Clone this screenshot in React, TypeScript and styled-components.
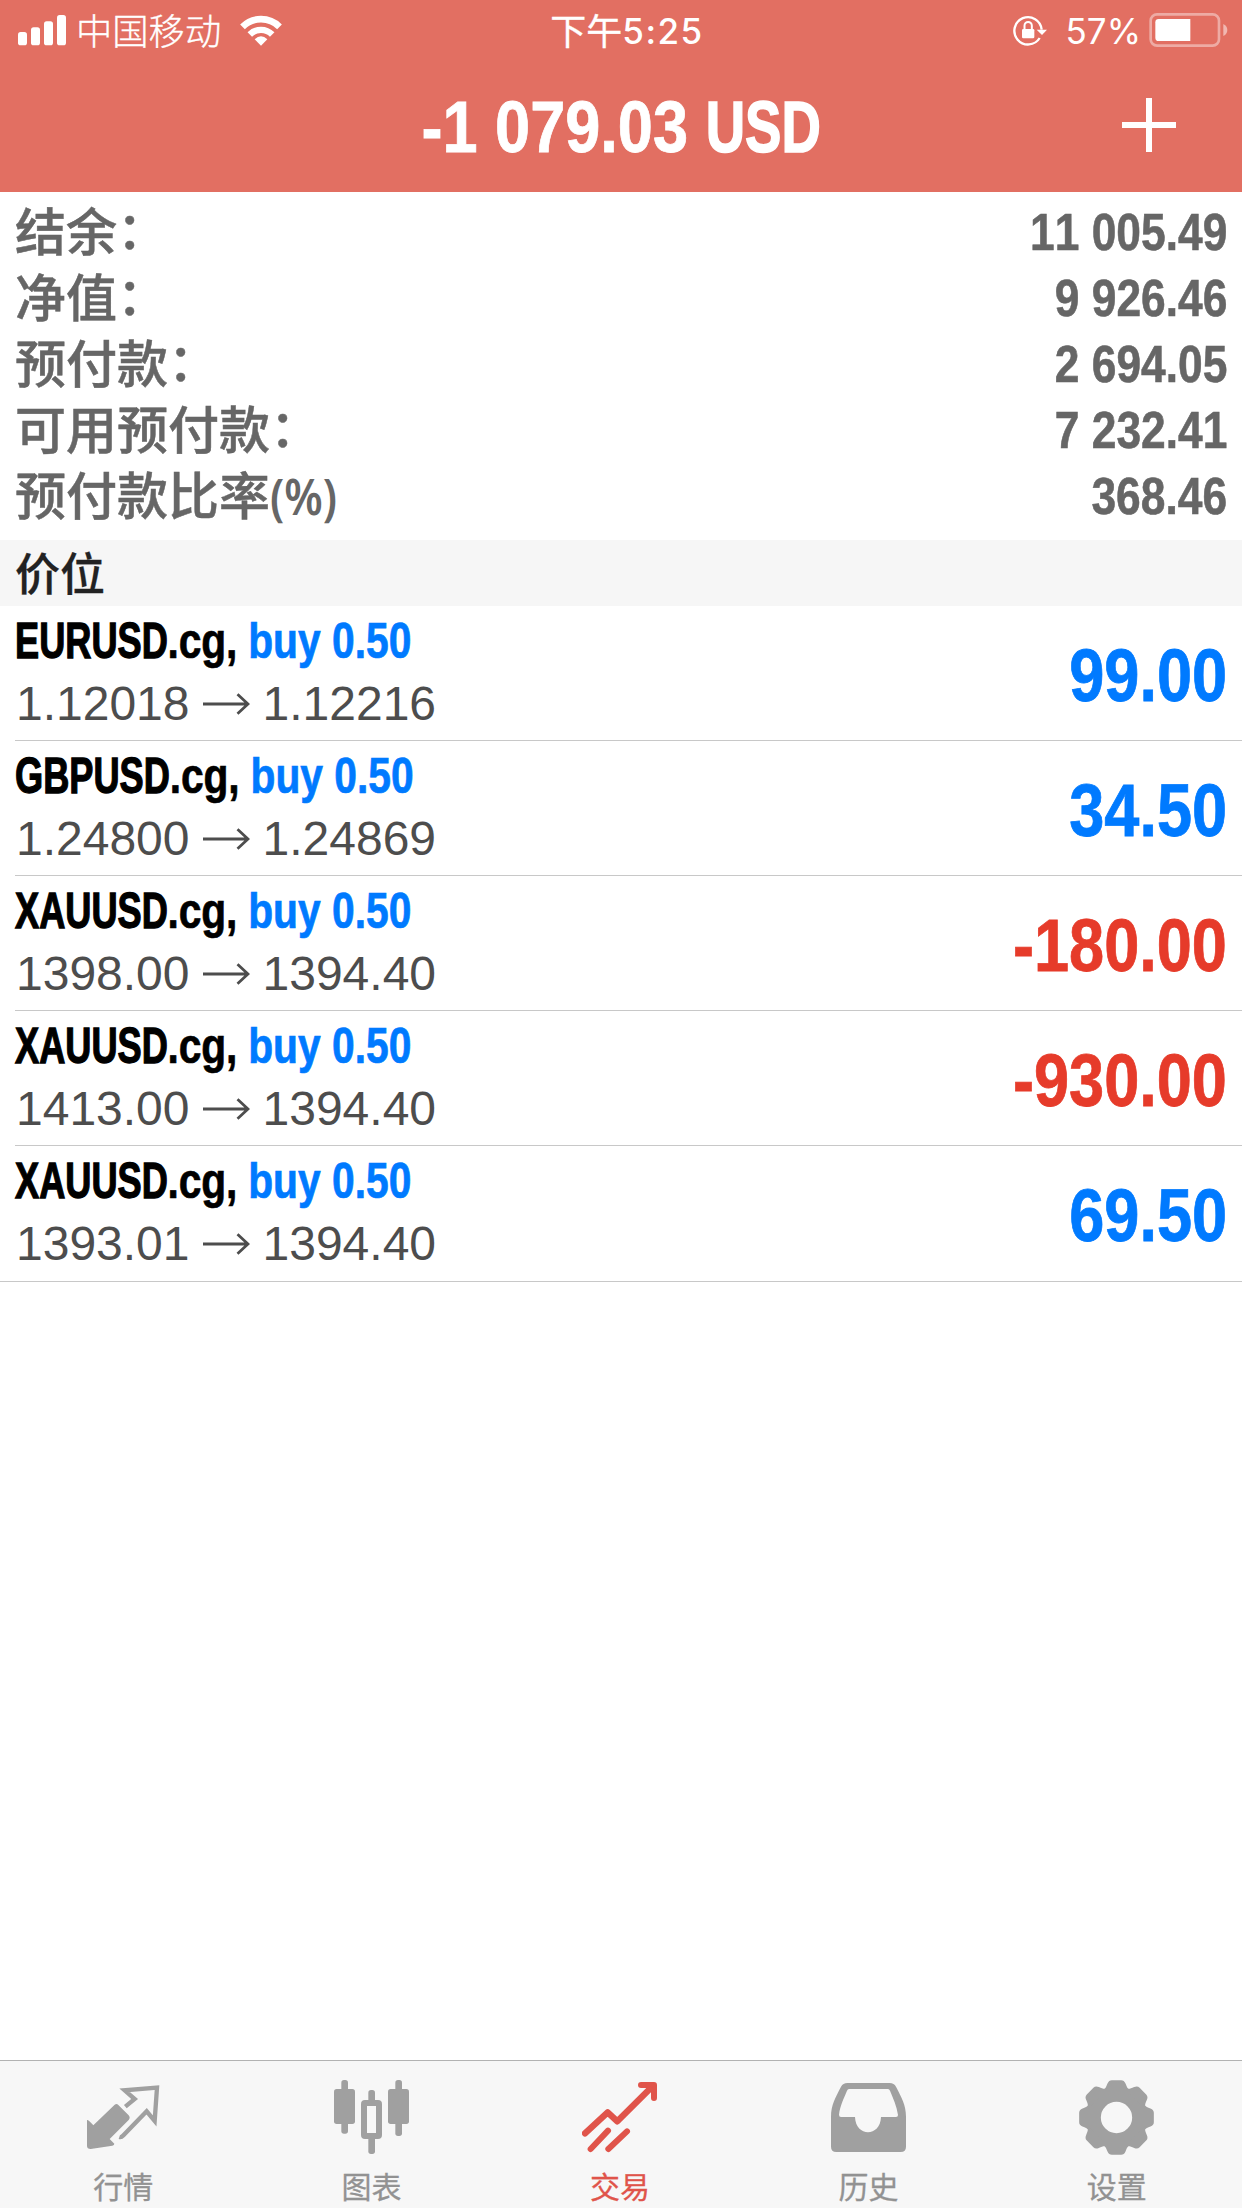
import React from "react";
import styled, { createGlobalStyle } from "styled-components";

const GlobalStyle = createGlobalStyle`
  html, body { margin: 0; padding: 0; background: #fff; }
  *, *::before, *::after { box-sizing: border-box; }
`;

const latin = `"Liberation Sans", "Noto Sans CJK SC", sans-serif`;
const cjk = `"Noto Sans CJK SC", sans-serif`;

const Screen = styled.div`
  width: 1242px;
  height: 2208px;
  display: flex;
  flex-direction: column;
  overflow: hidden;
  background: #fff;
  font-family: ${latin};
  font-kerning: none;
`;

const Header = styled.header`
  height: 192px;
  flex: none;
  display: flex;
  flex-direction: column;
  color: #fff;
  background: #e26f62;
`;

const StatusBar = styled.div`
  height: 60px;
  display: grid;
  grid-template-columns: 1fr auto 1fr;
  align-items: center;
  padding: 0 14px 0 18px;
`;

const StatusGroup = styled.div<{ $end?: boolean }>`
  display: flex;
  align-items: center;
  justify-content: ${(p) => (p.$end ? "flex-end" : "flex-start")};
`;

const Carrier = styled.span`
  margin: -2px 19px 0 10px;
  font: 300 36.3px/60px ${cjk};
  -webkit-text-stroke: 0.35px currentColor;
`;

const Clock = styled.div`
  display: flex;
  align-items: center;
  margin: 0 0 0 8px;
`;

const ClockPeriod = styled.span`
  margin-top: -2px;
  font: 400 36px/58px ${cjk};
  -webkit-text-stroke: 0.3px currentColor;
`;

const ClockDigits = styled.span`
  margin-top: 3px;
  font: 500 35px/57px Inter, sans-serif;
  letter-spacing: 1.5px;
`;

const Percent = styled.span`
  margin: 3px 8px 0 19px;
  font: 400 35px/57px Inter, sans-serif;
`;

const TitleBar = styled.div`
  height: 132px;
  display: grid;
  grid-template-columns: 1fr auto 1fr;
  align-items: center;
  padding-right: 66px;
  padding-left: 66px;
`;

const Title = styled.h1`
  grid-column: 2;
  margin: 2px 0 0;
  font-size: 73px;
  font-weight: 700;
  line-height: 130px;
  white-space: nowrap;
  transform: scaleX(0.864);
  -webkit-text-stroke: 0.8px currentColor;
`;

const Currency = styled.span`
  display: inline-block;
  margin: 0 -0.28em 0 0;
  transform: scaleX(0.865);
  transform-origin: left center;
  -webkit-text-stroke: 1.6px currentColor;
`;

const AddButton = styled.button`
  justify-self: end;
  width: 54px;
  height: 54px;
  margin-top: -2px;
  padding: 0;
  border: 0;
  background: none;
  color: inherit;
`;

const Summary = styled.section`
  flex: none;
  padding: 6px 15px 12px;
`;

const SummaryRow = styled.div`
  height: 66px;
  display: flex;
  align-items: center;
  justify-content: space-between;
  color: #666;
`;

const SummaryLabel = styled.span`
  margin-top: -4px;
  font: 500 51px/62px ${cjk};
  -webkit-text-stroke: 0.5px currentColor;
`;

const Colon = styled.span`
  line-height: 0;
  vertical-align: 2px;
`;

const Unit = styled.span`
  display: inline-block;
  font: 600 50px/50px "Noto Sans", sans-serif;
  -webkit-text-stroke: 0;
  transform: scaleX(0.88);
  transform-origin: left center;
`;

const SummaryValue = styled.span`
  margin-top: 2px;
  font-size: 52px;
  font-weight: 700;
  line-height: 64px;
  transform: scaleX(0.853);
  transform-origin: right center;
  -webkit-text-stroke: 0.6px currentColor;
`;

const SectionHeader = styled.h2`
  flex: none;
  height: 66px;
  margin: 0;
  padding-left: 15px;
  color: #222;
  background: #f6f6f6;
  font: 500 45px/64px ${cjk};
  -webkit-text-stroke: 0.3px currentColor;
`;

const Positions = styled.ul`
  flex: 1;
  margin: 0;
  padding: 0;
  list-style: none;
`;

const PositionRow = styled.li<{ $last: boolean }>`
  height: ${(p) => (p.$last ? 136 : 135)}px;
  margin-left: ${(p) => (p.$last ? 0 : 15)}px;
  padding: 0 15px 0 ${(p) => (p.$last ? 15 : 0)}px;
  display: flex;
  align-items: flex-start;
  justify-content: space-between;
  border-bottom: 1px solid #c8c8c8;
`;

const PositionInfo = styled.div`
  display: flex;
  flex-direction: column;
  padding-top: 4px;
`;

const SymbolLine = styled.div`
  font-size: 50px;
  font-weight: 700;
  line-height: 62px;
  white-space: pre;
  transform: scaleX(0.815);
  transform-origin: left center;
  -webkit-text-stroke: 0.7px currentColor;
`;

const Pair = styled.span`
  display: inline-block;
  margin-right: -0.48em;
  color: #000;
  transform: scaleX(0.888);
  transform-origin: left center;
  -webkit-text-stroke: 1.3px currentColor;
`;

const Suffix = styled.span`
  color: #000;
  letter-spacing: -0.2px;
`;

const Side = styled.span`
  color: #007aff;
`;

const PriceLine = styled.div`
  display: flex;
  align-items: center;
  gap: 13px;
  padding-left: 1px;
  color: #4d4d4d;
  font-size: 48px;
  line-height: 64px;
`;

const Profit = styled.span<{ $loss: boolean }>`
  color: ${(p) => (p.$loss ? "#e63b2a" : "#007aff")};
  font-size: 74px;
  font-weight: 700;
  line-height: 139px;
  transform: scaleX(0.853);
  transform-origin: right center;
  -webkit-text-stroke: 0.8px currentColor;
`;

const TabBar = styled.nav`
  height: 148px;
  flex: none;
  display: grid;
  grid-template-columns: repeat(5, 1fr);
  margin-left: -1px;
  padding-right: 1px;
  border-top: 1px solid #b2b2b2;
  background: #f7f7f7;
`;

const Tab = styled.a<{ $active?: boolean }>`
  display: flex;
  flex-direction: column;
  align-items: center;
  gap: 15px;
  padding-top: 19px;
  color: ${(p) => (p.$active ? "#e0544a" : "#a0a0a0")};
`;

const TabLabel = styled.span<{ $active?: boolean }>`
  color: ${(p) => (p.$active ? "#e0544a" : "#929292")};
  font: 400 30px/30px ${cjk};
  -webkit-text-stroke: 0.3px currentColor;
`;

const SignalIcon = () => (
  <svg width="48" height="31" viewBox="54 44 144 93" fill="currentColor">
    <rect x="54" y="95" width="27" height="40" rx="8" />
    <rect x="93" y="81" width="27" height="54" rx="8" />
    <rect x="132" y="63" width="27" height="72" rx="8" />
    <rect x="171" y="44" width="27" height="91" rx="8" />
  </svg>
);

const WifiIcon = () => (
  <svg width="42" height="31" viewBox="720 44 126 93" fill="none" stroke="currentColor">
    <path d="M727.5 79.5A78.5 78.5 0 0 1 838.5 79.5" strokeWidth="20" />
    <path d="M749.4 102.4A47.5 47.5 0 0 1 816.6 102.4" strokeWidth="19" />
    <path d="M783 136L764 117Q783 99 802 117Z" fill="currentColor" stroke="none" />
  </svg>
);

const RotationLockIcon = () => (
  <svg width="34" height="31" viewBox="518 44 102 93" fill="none" stroke="currentColor">
    <path d="M598 113A41 41 0 1 1 604 88" strokeWidth="7" />
    <path d="M589 88H620L605 104Z" fill="currentColor" stroke="none" />
    <rect x="545" y="86" width="37" height="28" rx="4" fill="currentColor" stroke="none" />
    <path d="M552.5 88V76A11 11 0 0 1 574.5 76V88" strokeWidth="6" />
  </svg>
);

const BatteryIcon = () => (
  <svg width="79" height="34" viewBox="926 39 237 102" fill="currentColor">
    <rect x="931" y="43" width="205" height="94" rx="19" fill="none" stroke="currentColor" strokeWidth="8" opacity=".42" />
    <path d="M1149 72Q1161 78 1161 90T1149 108Z" opacity=".5" />
    <path d="M1050 57V123H955Q945 123 945 113V67Q945 57 955 57Z" />
  </svg>
);

const PlusIcon = () => (
  <svg width="54" height="54" viewBox="0 0 54 54" display="block">
    <path d="M27 0V54M0 27H54" stroke="currentColor" strokeWidth="6" />
  </svg>
);

const PriceArrow = () => (
  <svg width="47" height="24" viewBox="0 0 47 24" fill="none" stroke="currentColor" strokeWidth="2.8">
    <path d="M0 12H45M34.5 2.3L45 12L34.5 21.7" />
  </svg>
);

const QuotesIcon = () => (
  <svg width="75" height="75" viewBox="258 90 225 225" fill="currentColor">
    <path d="M344 164Q350 159 355 165L386 196Q392 203 386 210L329 267L343 281Q343 286 337 287L272 297Q261 297 261 288V210Q265 209 280 226Z" />
    <path d="M376 170L404 147L374 121L471 113L464 213L440 184L369 257Q364 263 358 261" fill="none" stroke="currentColor" strokeWidth="13" />
  </svg>
);

const ChartIcon = () => (
  <svg width="75" height="75" viewBox="1005 90 225 225" fill="currentColor">
    <rect x="1027" y="90" width="20" height="161" rx="8" />
    <rect x="1005" y="117" width="63" height="105" rx="8" />
    <rect x="1189" y="90" width="20" height="168" rx="8" />
    <rect x="1167" y="117" width="63" height="105" rx="8" />
    <rect x="1108" y="120" width="20" height="45" rx="8" />
    <rect x="1108" y="255" width="20" height="57" rx="8" />
    <rect x="1095" y="159" width="45" height="99" rx="3" fill="none" stroke="currentColor" strokeWidth="18" />
  </svg>
);

const TradeIcon = () => (
  <svg width="75" height="75" viewBox="486 90 225 225" fill="none" stroke="currentColor" strokeLinejoin="round" strokeLinecap="round">
    <path d="M495 250L563 187L592 214L696 110" strokeWidth="19" />
    <path d="M663 105H702V144" strokeWidth="18" />
    <path d="M680 106L701 127V106Z" strokeWidth="8" fill="currentColor" />
    <path d="M512 297L564 242" strokeWidth="18" />
    <path d="M565 297L621 244" strokeWidth="18" />
  </svg>
);

const HistoryIcon = () => (
  <svg width="75" height="75" viewBox="24 90 225 225" fill="currentColor" fillRule="evenodd">
    <path d="M73 99H200Q213 99 219 110C235 142 249 164 249 200V290Q249 306 233 306H40Q24 306 24 290V200C24 164 38 142 54 110Q60 99 73 99ZM78 117Q74 117 72 122C62 146 51 168 48 194Q48 201 54 201H96C98 262 172 262 174 201H219Q225 201 225 195C221 168 211 146 201 122Q199 117 195 117Z" />
  </svg>
);

const toothAngles = [0, 45, 90, 135, 180, 225, 270, 315];

const SettingsIcon = () => (
  <svg width="75" height="75" viewBox="-112.5 -112.5 225 225" fill="currentColor">
    <circle r="69.5" fill="none" stroke="currentColor" strokeWidth="45" />
    {toothAngles.map((a) => (
      <path
        key={a}
        transform={`rotate(${a})`}
        d="M-46 -78C-32 -87 -32 -90 -27 -102Q-23 -112 -14 -112H14Q23 -112 27 -102C32 -90 32 -87 46 -78Z"
      />
    ))}
  </svg>
);

const balances = [
  { label: "结余", value: "11 005.49" },
  { label: "净值", value: "9 926.46" },
  { label: "预付款", value: "2 694.05" },
  { label: "可用预付款", value: "7 232.41" },
  { label: "预付款比率", unit: "(%)", value: "368.46" },
];

const positions = [
  { pair: "EURUSD", open: "1.12018", current: "1.12216", profit: "99.00" },
  { pair: "GBPUSD", open: "1.24800", current: "1.24869", profit: "34.50" },
  { pair: "XAUUSD", open: "1398.00", current: "1394.40", profit: "-180.00" },
  { pair: "XAUUSD", open: "1413.00", current: "1394.40", profit: "-930.00" },
  { pair: "XAUUSD", open: "1393.01", current: "1394.40", profit: "69.50" },
];

const tabs = [
  { label: "行情", Icon: QuotesIcon },
  { label: "图表", Icon: ChartIcon },
  { label: "交易", Icon: TradeIcon, active: true },
  { label: "历史", Icon: HistoryIcon },
  { label: "设置", Icon: SettingsIcon },
];

export default function App() {
  return (
    <>
      <GlobalStyle />
      <Screen>
        <Header>
          <StatusBar>
            <StatusGroup>
              <SignalIcon />
              <Carrier>中国移动</Carrier>
              <WifiIcon />
            </StatusGroup>
            <Clock>
              <ClockPeriod>下午</ClockPeriod>
              <ClockDigits>5:25</ClockDigits>
            </Clock>
            <StatusGroup $end>
              <RotationLockIcon />
              <Percent>57%</Percent>
              <BatteryIcon />
            </StatusGroup>
          </StatusBar>
          <TitleBar>
            <Title>
              -1 079.03 <Currency>USD</Currency>
            </Title>
            <AddButton aria-label="+">
              <PlusIcon />
            </AddButton>
          </TitleBar>
        </Header>
        <Summary>
          {balances.map(({ label, unit, value }) => (
            <SummaryRow key={label}>
              <SummaryLabel>
                {label}
                {unit ? <Unit>{unit}</Unit> : <Colon>：</Colon>}
              </SummaryLabel>
              <SummaryValue>{value}</SummaryValue>
            </SummaryRow>
          ))}
        </Summary>
        <SectionHeader>价位</SectionHeader>
        <Positions>
          {positions.map((p, i) => (
            <PositionRow key={i} $last={i === positions.length - 1}>
              <PositionInfo>
                <SymbolLine>
                  <Pair>{p.pair}</Pair>
                  <Suffix>.cg, </Suffix>
                  <Side>buy 0.50</Side>
                </SymbolLine>
                <PriceLine>
                  <span>{p.open}</span>
                  <PriceArrow />
                  <span>{p.current}</span>
                </PriceLine>
              </PositionInfo>
              <Profit $loss={p.profit.startsWith("-")}>{p.profit}</Profit>
            </PositionRow>
          ))}
        </Positions>
        <TabBar>
          {tabs.map(({ label, Icon, active }) => (
            <Tab key={label} $active={active}>
              <Icon />
              <TabLabel $active={active}>{label}</TabLabel>
            </Tab>
          ))}
        </TabBar>
      </Screen>
    </>
  );
}
